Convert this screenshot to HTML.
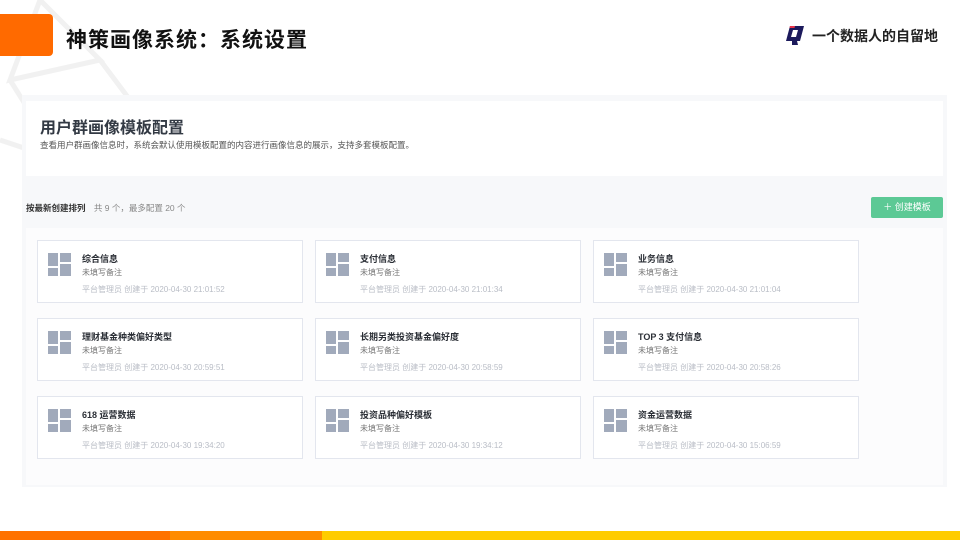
<!DOCTYPE html>
<html><head><meta charset="utf-8"><style>
*{margin:0;padding:0;box-sizing:border-box}
body{width:960px;height:540px;background:#fff;position:relative;overflow:hidden;font-family:"Liberation Sans","Noto Sans CJK SC",sans-serif}
.abs{position:absolute}
.card{position:absolute;width:266px;height:63px;background:#fff;border:1px solid #e3e6ee}
.card .ic{position:absolute;left:10px;top:12px;width:24px;height:24px}
.card .t{position:absolute;left:44px;top:11px;font-size:9px;font-weight:bold;color:#2b2f36}
.card .s{position:absolute;left:44px;top:26px;font-size:8px;color:#777}
.card .m{position:absolute;left:44px;top:43px;font-size:8px;color:#b9bdc6}
</style></head><body>
<svg class="abs" style="left:0;top:0" width="200" height="260"><g fill="none" stroke="#f1f1f1" stroke-width="5"><path d="M40 0 L100 60 L10 80 L40 0"/><path d="M10 80 L60 160 L130 100 L100 60"/><path d="M0 140 L60 160 L40 250"/><path d="M130 100 L140 160"/></g></svg>
<div class="abs" style="left:0;top:14px;width:53px;height:42px;background:#ff6a00;border-radius:0 4px 4px 0"></div>
<div class="abs" style="left:66px;top:24px;font-size:21px;font-weight:bold;color:#111;letter-spacing:1px">神策画像系统：系统设置</div>
<svg class="abs" style="left:783px;top:24px" width="24" height="24" viewBox="0 0 24 24"><path d="M7 2 H21 L17 17 H14 L15 21 H9 L9 17 H3 Z M10 6 L8 13 H13 L15 6 Z" fill="#1c1a5c" fill-rule="evenodd"/><path d="M7 2 H12 L11.5 4 H6.5 Z" fill="#e8344a"/></svg>
<div class="abs" style="left:812px;top:26px;font-size:14px;font-weight:bold;color:#222">一个数据人的自留地</div>
<div class="abs" style="left:22px;top:95px;width:925px;height:392px;background:#f7f8fa"></div>
<div class="abs" style="left:26px;top:101px;width:917px;height:75px;background:#fff"></div>
<div class="abs" style="left:40px;top:114px;font-size:16px;font-weight:bold;color:#333a44">用户群画像模板配置</div>
<div class="abs" style="left:40px;top:139px;font-size:8.5px;color:#555">查看用户群画像信息时，系统会默认使用模板配置的内容进行画像信息的展示，支持多套模板配置。</div>
<div class="abs" style="left:26px;top:202px;font-size:8.5px;color:#333"><b>按最新创建排列</b> <span style="color:#888;margin-left:6px">共 9 个，最多配置 20 个</span></div>
<div class="abs" style="left:871px;top:197px;width:72px;height:21px;background:#5cc995;border-radius:2px;color:#fff;font-size:9px;line-height:21px;text-align:center">＋ 创建模板</div>
<div class="abs" style="left:26px;top:228px;width:917px;height:257px;background:#fcfcfd"></div>
<svg width="0" height="0" style="position:absolute"><defs><g id="i" fill="#a1aabb"><rect x="0" y="0" width="10" height="13"/><rect x="0" y="15" width="10" height="8"/><rect x="12" y="0" width="11" height="9"/><rect x="12" y="11" width="11" height="12"/></g></defs></svg>
<div class="card" style="left:37px;top:240px"><svg class="ic"><use href="#i"/></svg><div class="t">综合信息</div><div class="s">未填写备注</div><div class="m">平台管理员 创建于 2020-04-30 21:01:52</div></div>
<div class="card" style="left:315px;top:240px"><svg class="ic"><use href="#i"/></svg><div class="t">支付信息</div><div class="s">未填写备注</div><div class="m">平台管理员 创建于 2020-04-30 21:01:34</div></div>
<div class="card" style="left:593px;top:240px"><svg class="ic"><use href="#i"/></svg><div class="t">业务信息</div><div class="s">未填写备注</div><div class="m">平台管理员 创建于 2020-04-30 21:01:04</div></div>
<div class="card" style="left:37px;top:318px"><svg class="ic"><use href="#i"/></svg><div class="t">理财基金种类偏好类型</div><div class="s">未填写备注</div><div class="m">平台管理员 创建于 2020-04-30 20:59:51</div></div>
<div class="card" style="left:315px;top:318px"><svg class="ic"><use href="#i"/></svg><div class="t">长期另类投资基金偏好度</div><div class="s">未填写备注</div><div class="m">平台管理员 创建于 2020-04-30 20:58:59</div></div>
<div class="card" style="left:593px;top:318px"><svg class="ic"><use href="#i"/></svg><div class="t">TOP 3 支付信息</div><div class="s">未填写备注</div><div class="m">平台管理员 创建于 2020-04-30 20:58:26</div></div>
<div class="card" style="left:37px;top:396px"><svg class="ic"><use href="#i"/></svg><div class="t">618 运营数据</div><div class="s">未填写备注</div><div class="m">平台管理员 创建于 2020-04-30 19:34:20</div></div>
<div class="card" style="left:315px;top:396px"><svg class="ic"><use href="#i"/></svg><div class="t">投资品种偏好模板</div><div class="s">未填写备注</div><div class="m">平台管理员 创建于 2020-04-30 19:34:12</div></div>
<div class="card" style="left:593px;top:396px"><svg class="ic"><use href="#i"/></svg><div class="t">资金运营数据</div><div class="s">未填写备注</div><div class="m">平台管理员 创建于 2020-04-30 15:06:59</div></div>
<div class="abs" style="left:0;top:531px;width:170px;height:9px;background:#ff7200"></div>
<div class="abs" style="left:170px;top:531px;width:152px;height:9px;background:#ff8c00"></div>
<div class="abs" style="left:322px;top:531px;width:638px;height:9px;background:#ffcc00"></div>
</body></html>
